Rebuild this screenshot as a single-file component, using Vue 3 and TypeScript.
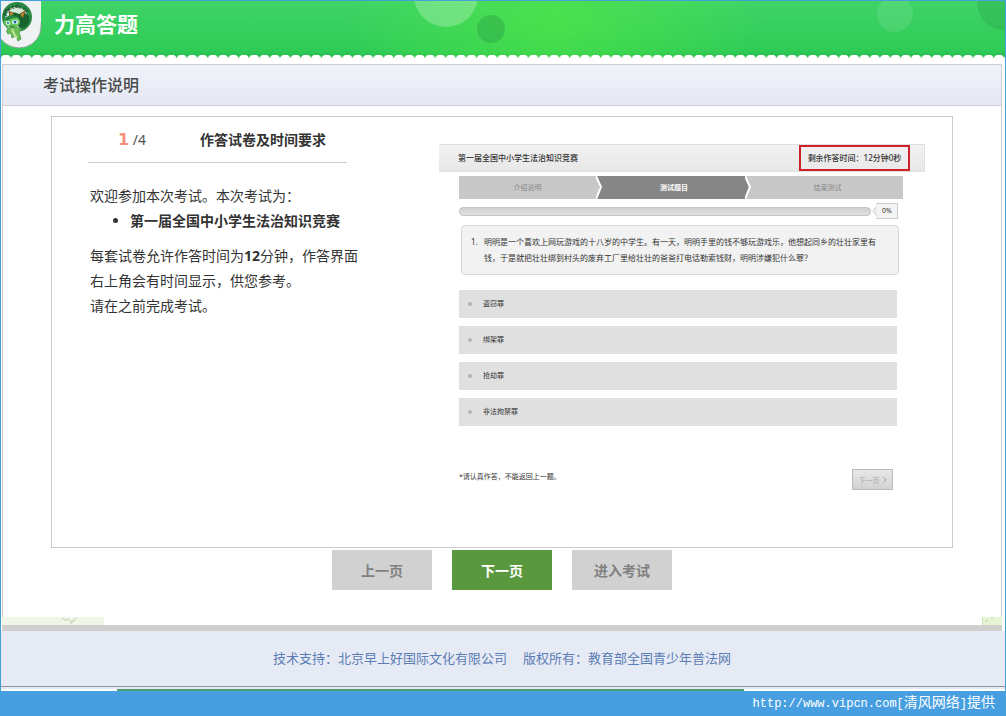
<script setup lang="ts">
import { ref } from 'vue'

const steps = ['介绍说明', '测试题目', '结束测试']
const options = ['盗窃罪', '绑架罪', '抢劫罪', '非法拘禁罪']
const picked = ref<string>('')
</script>

<template>
  <div class="window">
    <header class="banner">
      <svg class="bubbles" viewBox="0 0 1004 60" preserveAspectRatio="xMidYMin slice" aria-hidden="true">
        <circle cx="445" cy="-6" r="32" fill="#fff" opacity=".24" />
        <circle cx="490" cy="28" r="14" fill="#2a9a48" opacity=".4" />
        <circle cx="894" cy="13" r="18" fill="#fff" opacity=".1" />
        <circle cx="1003" cy="2" r="27" fill="#2a9a48" opacity=".3" />
      </svg>
      <svg class="logo" width="42" height="48" viewBox="0 0 42 48" role="img" aria-label="普法网">
        <path d="M0 0H40V26A22 21 0 0 1 0 38Z" fill="#f0f1f2" />
        <path d="M40 22V26A22 21 0 0 1 0 38" fill="none" stroke="#8ea896" stroke-width="1" />
        <circle cx="16" cy="16" r="15" fill="#2b8a45" />
        <path d="M5 21A11 11 0 0 1 26 13L20 26L8 30Z" fill="#d4e8d5" />
        <path id="logo-arc" d="M4 19A12 12 0 0 1 28 19" fill="none" />
        <text class="logo-text"><textPath href="#logo-arc" startOffset="4">pfw.edu.cn</textPath></text>
        <path d="M7 18C8 11 13 10 18 13C24 9 30 15 28 21C26 27 21 29 17 25Z" fill="#17632f" />
        <path d="M9 15L8 10L13 13M19 13L24 10L22 17" fill="#c48a35" stroke="#745221" stroke-width="1" />
        <ellipse cx="11" cy="21" rx="8" ry="6" fill="#69c85c" />
        <path d="M3 18Q10 11 19 17Q12 16 6 20Z" fill="#268644" />
        <ellipse cx="7" cy="22" rx="2" ry="2" fill="#e9faff" />
        <ellipse cx="14" cy="21" rx="3" ry="2" fill="#e9faff" />
        <circle cx="7" cy="22" r="1" fill="#176f92" />
        <circle cx="14" cy="21" r="1.5" fill="#176f92" />
        <path d="M9 25Q11 27 13 25" fill="none" stroke="#286b30" />
        <path d="M8 27Q4 29 7 33L10 32L11 37L14 35L15 34L17 40L20 38L18 31L20 28L15 26Z" fill="#6bbd58" stroke="#4fa552" />
        <path d="M11 28Q13 34 16 37" fill="none" stroke="#c7e79a" stroke-width="2" />
      </svg>
      <h1>力高答题</h1>
    </header>

    <main class="panel">
      <h2 class="panel-title">考试操作说明</h2>
      <section class="guide">
        <div class="intro">
          <div class="intro-head">
            <span class="count"><b>1</b> /4</span>
            <h3>作答试卷及时间要求</h3>
          </div>
          <div class="intro-body">
            <p>欢迎参加本次考试。本次考试为：</p>
            <ul>
              <li>第一届全国中小学生法治知识竞赛</li>
            </ul>
            <p>每套试卷允许作答时间为<b>12</b>分钟，作答界面右上角会有时间显示，供您参考。</p>
            <p>请在之前完成考试。</p>
          </div>
        </div>

        <div class="preview">
          <div class="preview-head">
            <span>第一届全国中小学生法治知识竞赛</span>
            <strong class="timer">剩余作答时间：12分钟0秒</strong>
          </div>
          <div class="preview-body">
            <ol class="steps">
              <li v-for="(step, i) in steps" :key="step" :class="{ current: i === 1 }">
                <span>{{ step }}</span>
                <svg v-if="i < 2" width="7" height="23" viewBox="0 0 7 23" aria-hidden="true">
                  <rect width="7" height="23" :fill="i === 0 ? '#868686' : '#c8c8c8'" />
                  <path d="M0 0L4 11L0 23Z" :fill="i === 0 ? '#c8c8c8' : '#868686'" />
                  <path d="M0 0L5 11L0 23" fill="none" stroke="#fff" stroke-width="2" />
                </svg>
              </li>
            </ol>
            <div class="progress">
              <div class="track"></div>
              <svg width="4" height="10" viewBox="0 0 4 10" aria-hidden="true">
                <path d="M4 1L1 5L4 9" fill="#f2f2f2" stroke="#ccc" />
              </svg>
              <span class="percent">0%</span>
            </div>
            <div class="question">
              <span>1.</span>
              <p>明明是一个喜欢上网玩游戏的十八岁的中学生。有一天，明明手里的钱不够玩游戏乐，他想起同乡的壮壮家里有钱，于是就把壮壮绑到村头的废弃工厂里给壮壮的爸爸打电话勒索钱财，明明涉嫌犯什么罪？</p>
            </div>
            <div class="options">
              <label v-for="option in options" :key="option">
                <input v-model="picked" type="radio" name="answer" :value="option" />
                <span>{{ option }}</span>
              </label>
            </div>
            <div class="preview-foot">
              <span>*请认真作答，不能返回上一题。</span>
              <button type="button">下一页
                <svg width="5" height="8" viewBox="0 0 5 8" aria-hidden="true">
                  <path d="M1 1L4 4L1 7" fill="none" stroke="#aaa" />
                </svg>
              </button>
            </div>
          </div>
        </div>
      </section>

      <nav class="actions">
        <button type="button">上一页</button>
        <button type="button" class="primary">下一页</button>
        <button type="button">进入考试</button>
      </nav>
    </main>

    <div class="ground" aria-hidden="true">
      <svg width="102" height="8" viewBox="0 0 102 8">
        <rect width="102" height="8" fill="#f0f7e9" />
        <path d="M60 1L64 3M63 4Q67 0 69 5L75 1M68 7L73 3" fill="none" stroke="#c2d2b4" />
      </svg>
      <svg width="20" height="8" viewBox="0 0 20 8">
        <rect width="20" height="8" fill="#e8f5d4" />
        <path d="M0 0V8M3 5L6 3M9 1H11" stroke="#b5cda0" />
      </svg>
    </div>
    <footer class="footer">
      <span>技术支持：北京早上好国际文化有限公司</span>
      <span>版权所有：教育部全国青少年普法网</span>
    </footer>
    <div class="edge"></div>
    <div class="credit"><span class="url">http://www.vipcn.com[</span>清风网络<span class="url">]</span>提供</div>
  </div>
</template>

<style>
body {
  margin: 0;
}
</style>

<style scoped>
.window {
  box-sizing: border-box;
  min-height: 100vh;
  display: flex;
  flex-direction: column;
  border: 1px solid #459fdb;
  border-bottom: 0;
  background: #fff;
  color: #333;
  font: 14px/25px "Noto Sans", "Noto Sans CJK SC", sans-serif;
}
h1, h2, h3, p, ul, ol {
  margin: 0;
  padding: 0;
}
button {
  border: 0;
  padding: 0;
  font-family: inherit;
  cursor: pointer;
}
.banner {
  position: relative;
  display: flex;
  height: 63px;
  background:
    radial-gradient(circle at 5px 5px, #fff 5px, transparent 6px) 0 54px / calc(100% / 97) 6px repeat-x,
    linear-gradient(#fff, #fff) 0 59px / 100% 4px no-repeat,
    radial-gradient(ellipse 210px 120px at 55% 30%, rgba(80, 230, 70, .75), transparent),
    linear-gradient(#3fd468, #2ecb57 50px, #28b54c 58px);
}
.bubbles {
  position: absolute;
  top: 0;
  left: 0;
  width: 100%;
  height: 54px;
}
.logo {
  position: relative;
  flex: none;
}
.logo-text {
  font: bold 5px "Liberation Sans", sans-serif;
  fill: #0c3d1b;
}
h1 {
  position: relative;
  margin-left: 11px;
  color: #fff;
  font-size: 21px;
  line-height: 46px;
}
.panel {
  margin: 0 3px 0 1px;
  border: 1px solid #ccced2;
  border-bottom: 0;
  padding-bottom: 27px;
}
.panel-title {
  padding-left: 40px;
  border-bottom: 1px solid #ccced2;
  background: linear-gradient(#f0f3fa, #e4e8f3);
  color: #4a4a4a;
  font-size: 16px;
  font-weight: 500;
  line-height: 40px;
}
.guide {
  box-sizing: border-box;
  display: flex;
  min-height: 432px;
  margin: 10px 48px 0;
  border: 1px solid #ccc;
}
.intro {
  flex: none;
  box-sizing: border-box;
  width: 387px;
  padding-left: 36px;
}
.intro-head {
  display: flex;
  width: 259px;
  height: 45px;
  border-bottom: 1px solid #ccc;
  line-height: 46px;
}
.count {
  width: 82px;
  padding-left: 30px;
  color: #555;
}
.count b {
  color: #f58f7c;
  font-family: "DejaVu Sans", sans-serif;
  font-size: 16px;
}
h3 {
  font-size: 14px;
}
.intro-body {
  width: 276px;
  padding: 20px 0 0 2px;
}
.intro-body ul {
  padding-left: 40px;
  margin-bottom: 10px;
  font-weight: bold;
}
.preview {
  flex: 1;
  min-width: 0;
  margin: 27px 27px 0 0;
  font-size: 8px;
  line-height: 16px;
}
.preview-head {
  display: flex;
  align-items: center;
  justify-content: space-between;
  box-sizing: border-box;
  height: 28px;
  padding: 0 14px 0 19px;
  border: 1px solid #e0e0e0;
  border-left: 0;
  background: linear-gradient(#f1f1f1, #e8e8e8);
  font-weight: 500;
}
.timer {
  box-sizing: border-box;
  width: 111px;
  border: 2px solid #cf2027;
  font-weight: 500;
  line-height: 22px;
  text-align: center;
}
.preview-body {
  padding: 4px 22px 0 20px;
}
.steps {
  display: grid;
  grid-template-columns: 144fr 149fr 151fr;
  height: 23px;
  list-style: none;
  font-size: 7px;
  line-height: 23px;
  text-align: center;
}
.steps li {
  display: flex;
  background: #c8c8c8;
  color: #8a8a8a;
}
.steps span {
  flex: 1;
}
.steps .current {
  background: #868686;
  color: #fff;
  font-weight: bold;
}
.progress {
  display: flex;
  align-items: center;
  margin: 4px 5px 0 0;
}
.track {
  flex: 1;
  box-sizing: border-box;
  height: 9px;
  margin-right: 1px;
  border: 1px solid #c4c4c4;
  border-radius: 4px;
  background: linear-gradient(#d0d0d0, #e0e0e0);
}
.percent {
  box-sizing: border-box;
  width: 22px;
  border: 1px solid #ccc;
  border-left-color: #e8e8e8;
  background: #f4f4f4;
  font-size: 7px;
  line-height: 14px;
  text-align: center;
}
.question {
  display: flex;
  box-sizing: border-box;
  min-height: 50px;
  margin: 6px 4px 0 2px;
  padding: 8px 16px 8px 9px;
  border: 1px solid #d8d8d8;
  border-radius: 4px;
  background: #f2f2f2;
}
.question span {
  flex: none;
  width: 13px;
}
.options {
  display: grid;
  gap: 8px;
  margin: 15px 6px 0 0;
}
.options label {
  display: flex;
  align-items: center;
  gap: 11px;
  height: 28px;
  padding-left: 9px;
  background: #e0e0e0;
  font-size: 7px;
}
.options input {
  appearance: none;
  width: 4px;
  height: 4px;
  margin: 0;
  border-radius: 50%;
  background: #b2b2b2;
}
.options input:checked {
  background: #5a9840;
}
.preview-foot {
  display: flex;
  justify-content: space-between;
  margin: 43px 10px 0 0;
  font-size: 7px;
}
.preview-foot button {
  display: flex;
  align-items: center;
  justify-content: center;
  gap: 2px;
  box-sizing: border-box;
  width: 41px;
  height: 21px;
  border: 1px solid #bbb;
  background: linear-gradient(#e8e8e8, #d2d2d2);
  color: #aaa;
  font-size: 7px;
}
.actions {
  display: flex;
  justify-content: center;
  gap: 20px;
  margin-top: 2px;
}
.actions button {
  width: 100px;
  height: 40px;
  background: #d1d1d1;
  color: #808080;
  font-size: 14px;
  font-weight: bold;
}
.actions .primary {
  background: #5a9840;
  color: #fff;
}
.ground {
  display: flex;
  justify-content: space-between;
  margin: 0 3px 0 1px;
  border-bottom: 6px solid #cfcfcf;
}
.footer {
  display: flex;
  justify-content: center;
  gap: 16px;
  padding-right: 2px;
  border-bottom: 1px solid #8f939b;
  background: #e6eaf4;
  color: #5b7db5;
  font-size: 13px;
  line-height: 55px;
}
.edge {
  height: 4px;
  background:
    linear-gradient(90deg, #fff 116px, #4f9f6c 116px 74%, #fff 74%) 0 2px / 100% 2px no-repeat,
    #e6eaf4;
}
.credit {
  flex: 1;
  padding-right: 10px;
  background: #479fe1;
  color: #fff;
  line-height: 22px;
  text-align: right;
}
.url {
  font: 12px/22px "Liberation Mono", monospace;
}
</style>
